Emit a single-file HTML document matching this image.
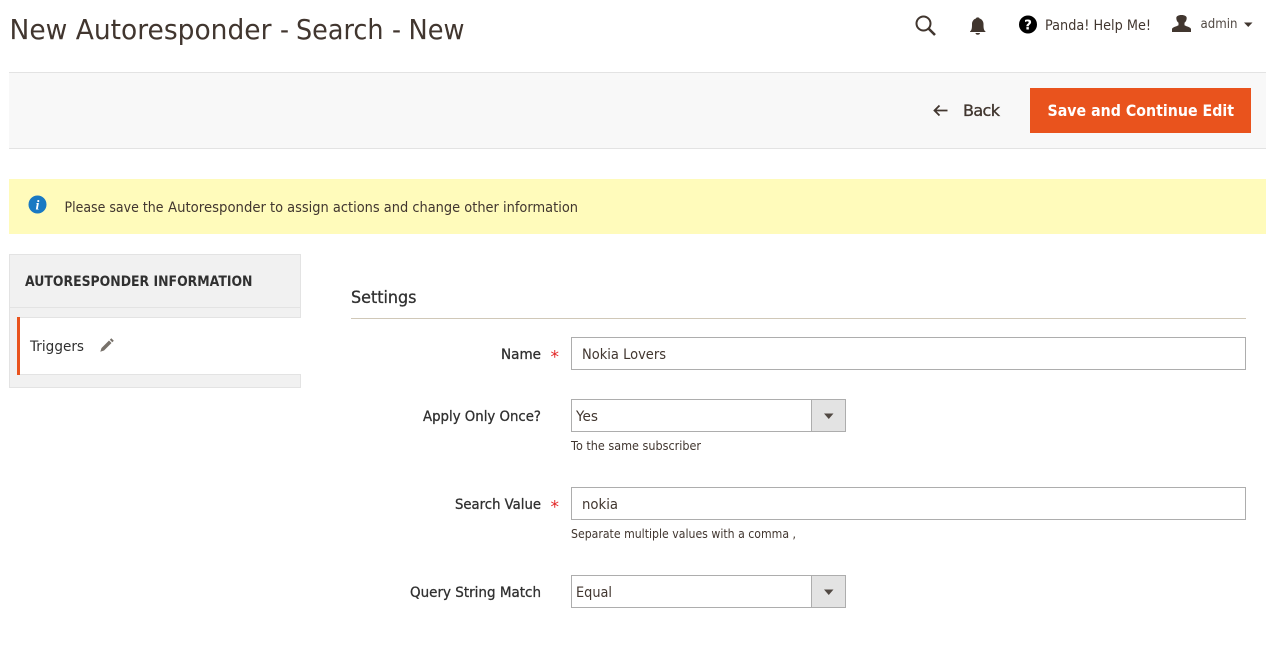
<!DOCTYPE html>
<html><head><meta charset="utf-8"><style>
html,body{margin:0;padding:0;background:#fff;width:1272px;height:656px;overflow:hidden}
svg{display:block}
text{font-family:"DejaVu Sans",sans-serif;font-size:14px;fill:#41362f}
.t{fill:#303030}
.s{stroke:#303030;stroke-width:.3px}
.n{font-size:12px;fill:#41362f}
.h{font-size:28px}
</style></head><body>
<svg width="1272" height="656" viewBox="0 0 1272 656" xmlns="http://www.w3.org/2000/svg">
<text x="9.500" y="39" class="h" textLength="262" lengthAdjust="spacingAndGlyphs">New Autoresponder</text>
<text x="280" y="39" class="h" textLength="9" lengthAdjust="spacingAndGlyphs">-</text>
<text x="296" y="39" class="h" textLength="87.500" lengthAdjust="spacingAndGlyphs">Search</text>
<text x="392" y="39" class="h" textLength="9" lengthAdjust="spacingAndGlyphs">-</text>
<text x="408.500" y="39" class="h" textLength="56" lengthAdjust="spacingAndGlyphs">New</text>

<!-- top icons -->
<circle cx="923.500" cy="23.500" r="7" fill="none" stroke="#41362f" stroke-width="2"/>
<path d="M928.500 28.500L935 35" stroke="#41362f" stroke-width="2.600" fill="none"/>
<path d="M970 31.500c2-1.500 2-4 2-7.500 0-3 2-5 4-5.500 0-1.500 3.500-1.500 3.500 0 2 .5 4 2.500 4 5.500 0 3.500 0 6 2 7.500v.5h-15.500zM975.500 33h4.500c0 2.400-4.500 2.400-4.500 0z" fill="#41362f"/>
<circle cx="1028" cy="24.500" r="9" fill="#000"/>
<text x="1028" y="29.500" text-anchor="middle" style="font-size:13.500px;font-weight:bold;fill:#fff">?</text>
<text x="1045" y="30" textLength="106" lengthAdjust="spacingAndGlyphs">Panda! Help Me!</text>
<path d="M1172 32v-3c0-1.700 4.700-2.700 6.500-3.800v-2.400c-1.400-1.200-2.200-2.800-2.200-4.800 0-1.800 2-3 5.200-3s5.200 1.200 5.200 3c0 2-.8 3.600-2.200 4.800v2.400c1.800 1.100 6.500 2.100 6.500 3.800v3z" fill="#41362f"/>
<text x="1200.500" y="28" style="font-size:13px;fill:#514943" textLength="37" lengthAdjust="spacingAndGlyphs">admin</text>
<path d="M1244 22.500h8.500l-4.250 4.500z" fill="#41362f"/>

<!-- action bar -->
<rect x="9" y="72" width="1257" height="77" fill="#f8f8f8"/>
<rect x="9" y="72" width="1257" height="1" fill="#e3e3e3"/>
<rect x="9" y="148" width="1257" height="1" fill="#e3e3e3"/>
<path d="M947.500 110.500h-12M939.500 105.500l-5 5 5 5" fill="none" stroke="#41362f" stroke-width="1.800"/>
<text x="963" y="116" style="font-size:16px;stroke:#41362f;stroke-width:.35px" textLength="37" lengthAdjust="spacing">Back</text>
<rect x="1030" y="88" width="221" height="45" fill="#e9531d"/>
<text x="1047.500" y="116" style="font-size:16px;font-weight:bold;fill:#fff" textLength="186.500" lengthAdjust="spacingAndGlyphs">Save and Continue Edit</text>

<!-- message -->
<rect x="9" y="179" width="1257" height="55" fill="#fffbbb"/>
<circle cx="37.500" cy="204.500" r="9" fill="#1979c3"/>
<text x="37.500" y="209.500" text-anchor="middle" style="font-family:'Liberation Serif',serif;font-size:14px;font-weight:bold;font-style:italic;fill:#fff">i</text>
<text x="64.500" y="212" textLength="99" lengthAdjust="spacingAndGlyphs">Please save the</text>
<text x="168" y="212" textLength="98" lengthAdjust="spacingAndGlyphs">Autoresponder</text>
<text x="270" y="212" textLength="308" lengthAdjust="spacingAndGlyphs">to assign actions and change other information</text>

<!-- sidebar -->
<rect x="9.500" y="254.500" width="291" height="133" fill="#f1f1f1" stroke="#e3e3e3"/>
<rect x="10" y="307" width="291" height="1" fill="#e3e3e3"/>
<rect x="17" y="317" width="284" height="58" fill="#fff"/>
<rect x="17" y="317" width="284" height="1" fill="#e3e3e3"/>
<rect x="17" y="374" width="284" height="1" fill="#e3e3e3"/>
<rect x="17" y="317" width="3" height="58" fill="#e9531d"/>
<text x="25" y="286" class="t" style="font-weight:bold;font-size:14px" textLength="227.500" lengthAdjust="spacingAndGlyphs">AUTORESPONDER INFORMATION</text>
<text x="30" y="351" class="t" textLength="54" lengthAdjust="spacingAndGlyphs">Triggers</text>
<path d="M100.300 351.700l1.200-3.700 7.500-7.500 2.500 2.500-7.500 7.500zM109.800 339.700l1.500-1.500 2.500 2.500-1.500 1.500z" fill="#77716a"/>

<!-- form -->
<text x="351" y="303" class="t s" style="font-size:17px" textLength="65.500" lengthAdjust="spacingAndGlyphs">Settings</text>
<rect x="351" y="318" width="895" height="1" fill="#d0c8b8"/>

<text x="501" y="359" class="t s" textLength="40" lengthAdjust="spacingAndGlyphs">Name</text>
<text x="550.500" y="362.500" style="font-size:17px;fill:#e22626">*</text>
<rect x="571.500" y="337.500" width="674" height="32" fill="#fff" stroke="#adadad"/>
<text x="582" y="359" textLength="84" lengthAdjust="spacingAndGlyphs">Nokia Lovers</text>

<text x="423" y="421" class="t s" textLength="118" lengthAdjust="spacingAndGlyphs">Apply Only Once?</text>
<rect x="571.500" y="399.500" width="274" height="32" fill="#fff" stroke="#adadad"/>
<rect x="811.500" y="399.500" width="34" height="32" fill="#e3e3e3" stroke="#adadad"/>
<path d="M824 413.500h9.500l-4.750 5.500z" fill="#514943"/>
<text x="576" y="421" textLength="22" lengthAdjust="spacingAndGlyphs">Yes</text>
<text x="571" y="450" class="n" textLength="130" lengthAdjust="spacingAndGlyphs">To the same subscriber</text>

<text x="455" y="509" class="t s" textLength="86" lengthAdjust="spacingAndGlyphs">Search Value</text>
<text x="550.500" y="512.500" style="font-size:17px;fill:#e22626">*</text>
<rect x="571.500" y="487.500" width="674" height="32" fill="#fff" stroke="#adadad"/>
<text x="582" y="509" textLength="36" lengthAdjust="spacingAndGlyphs">nokia</text>
<text x="571" y="538" class="n" textLength="225" lengthAdjust="spacingAndGlyphs">Separate multiple values with a comma ,</text>

<text x="410" y="597" class="t s" textLength="131" lengthAdjust="spacingAndGlyphs">Query String Match</text>
<rect x="571.500" y="575.500" width="274" height="32" fill="#fff" stroke="#adadad"/>
<rect x="811.500" y="575.500" width="34" height="32" fill="#e3e3e3" stroke="#adadad"/>
<path d="M824 589.500h9.500l-4.750 5.500z" fill="#514943"/>
<text x="576" y="597" textLength="36" lengthAdjust="spacingAndGlyphs">Equal</text>
</svg>
</body></html>
